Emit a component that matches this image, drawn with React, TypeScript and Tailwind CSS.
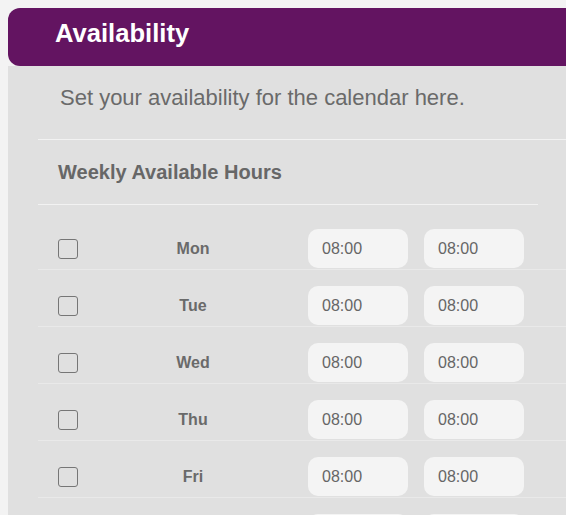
import React from "react";

const days = ["Mon", "Tue", "Wed", "Thu", "Fri", "Sat"];

function TimeBox({ value }: { value: string }) {
  return (
    <div className="flex h-[39px] w-[100px] shrink-0 items-center rounded-[10px] bg-[#f4f4f4] pl-[14px] text-[16px] text-[#666666]">
      {value}
    </div>
  );
}

export default function App() {
  return (
    <div
      className="h-[515px] w-[566px] overflow-hidden bg-[#f3f3f3] pl-[8px] pt-[8px]"
      style={{ fontFamily: '"Liberation Sans", Arial, sans-serif' }}
    >
      <div className="w-[620px]">
        <div className="h-[58px] rounded-l-[12px] bg-[#631461] pl-[47px] pt-[11px]">
          <h1 className="text-[25.6px] font-bold leading-[29px] text-white">Availability</h1>
        </div>
        <div className="min-h-[460px] bg-[#e0e0e0] pl-[30px]">
          <p className="pl-[22px] pt-[19px] text-[22px] leading-[25px] text-[#6a6a6a]">
            Set your availability for the calendar here.
          </p>
          <div className="mt-[29px] border-t border-[#f2f2f2]">
            <div className="w-[500px] border-b border-[#f2f2f2] pb-[20px] pl-[20px] pt-[21px]">
              <h2 className="text-[20px] font-bold leading-[23px] text-[#676767]">
                Weekly Available Hours
              </h2>
            </div>
            <div className="pt-[8px]">
              {days.map((d) => (
                <div
                  key={d}
                  className="flex items-center border-b border-[#e9e9e9] pb-[1px] pl-[20px] pt-[16px]"
                >
                  <div className="h-[20px] w-[20px] shrink-0 rounded-[3px] border border-[#767676]" />
                  <div className="w-[230px] shrink-0 text-center text-[16px] font-bold text-[#6a6a6a]">
                    {d}
                  </div>
                  <div className="flex gap-[16px]">
                    <TimeBox value="08:00" />
                    <TimeBox value="08:00" />
                  </div>
                </div>
              ))}
            </div>
          </div>
        </div>
      </div>
    </div>
  );
}
